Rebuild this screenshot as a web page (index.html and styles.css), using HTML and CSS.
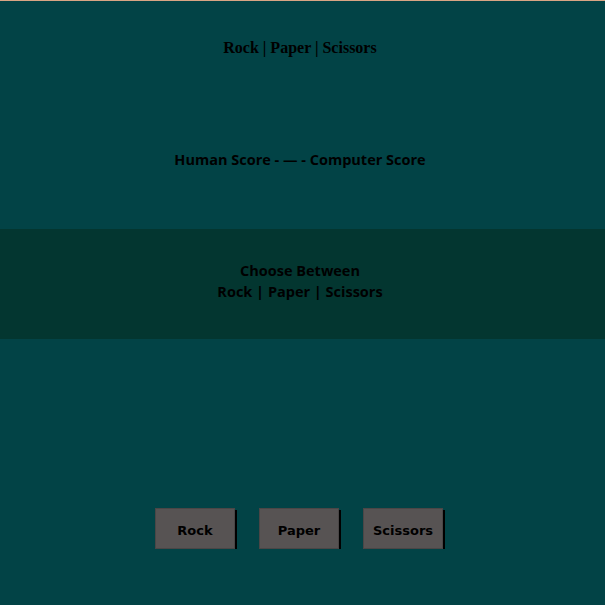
FILE: index.html
```html
<!DOCTYPE html>
<html>
<head>
  <meta charset="utf-8">
  <title>Rock Paper Scissors</title>
  <link rel="stylesheet" href="styles.css">
</head>
<body>
  <header class="title-bar">
    <h1>Rock | Paper | Scissors</h1>
  </header>

  <section class="score-bar">
    <p id="score">Human Score - &mdash; - Computer Score</p>
  </section>

  <section class="message-bar">
    <p id="mensaje">Choose Between<br>Rock | Paper | Scissors</p>
  </section>

  <section class="buttons">
    <button class="choice" data-pick="rock">Rock</button>
    <button class="choice" data-pick="paper">Paper</button>
    <button class="choice" data-pick="scissors">Scissors</button>
  </section>
</body>
</html>
```

FILE: styles.css
```css
body {
  background: #024346;
  color: #000;
  margin: 0;
  padding: 0;
  border-top: 1px solid #d9a584;
  font-family: "Open Sans", "Noto Sans", sans-serif;
}
.title-bar {
  height: 94px;
  padding-right: 5px;
  display: flex;
  align-items: center;
  justify-content: center;
}
h1 {
  margin: 0;
  font-family: "Liberation Serif", serif;
  font-size: 16px;
  font-weight: bold;
}
.score-bar {
  height: 134px;
  padding-right: 5px;
  padding-bottom: 6px;
  box-sizing: border-box;
  display: flex;
  align-items: center;
  justify-content: center;
}
.score-bar p,
.message-bar p {
  margin: 0;
  font-size: 14.5px;
  font-weight: bold;
  text-align: center;
  line-height: 21px;
}
.message-bar {
  background: #033630;
  height: 110px;
  padding-right: 5px;
  padding-bottom: 7px;
  box-sizing: border-box;
  display: flex;
  align-items: center;
  justify-content: center;
}
.buttons {
  display: flex;
  justify-content: center;
  gap: 24px;
  padding-top: 169px;
  padding-right: 7px;
}
.choice {
  width: 80px;
  height: 41px;
  background: #575353;
  color: #000;
  border: 1px solid #4a4646;
  box-shadow: 2px 2px 0 #000;
  font-family: "DejaVu Sans", Verdana, sans-serif;
  font-weight: bold;
  font-size: 13px;
  padding: 3px 0 0;
  cursor: pointer;
}
```
